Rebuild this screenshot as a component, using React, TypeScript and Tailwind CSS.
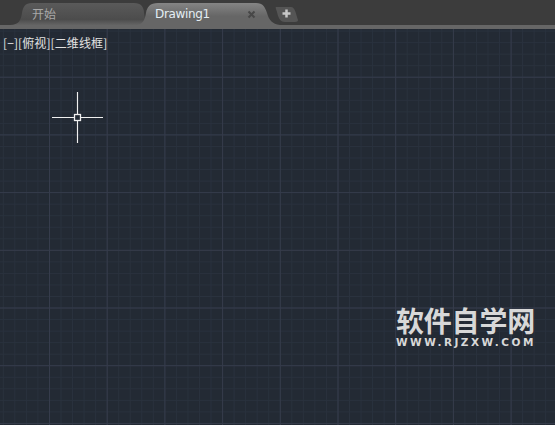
export default function App() {
  const vMajor = Array.from({ length: 9 }, (_, i) => 49.5 + 57.7 * i);
  const hMajor = Array.from({ length: 8 }, (_, i) => 19.5 + 57.7 * i);
  const vMinor = Array.from({ length: 50 }, (_, i) => 3.3 + 11.54 * i).filter((x) => x < 555);
  const hMinor = Array.from({ length: 40 }, (_, i) => 8 + 11.54 * i).filter((y) => y < 425);
  return (
    <div className="w-[555px] h-[425px] flex flex-col overflow-hidden bg-[#232a34] font-['DejaVu_Sans','Noto_Sans_CJK_SC',sans-serif]">
      <div className="h-[25px] shrink-0 flex pl-[10px] bg-[#3c3c3c]">
        <div className="relative w-[136px] h-[25px] flex">
          <svg className="absolute inset-0" width="136" height="25" viewBox="0 0 136 25">
            <defs>
              <linearGradient id="t1" x1="0" y1="0" x2="0" y2="1">
                <stop offset="0" stopColor="#5a5a5a" />
                <stop offset="0.75" stopColor="#4c4c4c" />
                <stop offset="1" stopColor="#646464" />
              </linearGradient>
              <linearGradient id="t2" x1="0" y1="0" x2="0" y2="1">
                <stop offset="0" stopColor="#858585" />
                <stop offset="0.6" stopColor="#666666" />
                <stop offset="1" stopColor="#666666" />
              </linearGradient>
            </defs>
            <path d="M0 25 C9 25 11 20 12 13 C13 7 15 3 22 3 L124 3 C131 3 134 7 134 13 L136 25 Z" fill="url(#t1)" />
          </svg>
          <span className="relative ml-[22px] mt-[6px] text-[12px] leading-[16px] text-[#a8a8a8] font-['Noto_Sans_CJK_SC',sans-serif]">开始</span>
        </div>
        <div className="relative w-[142px] h-[25px] -ml-[8px] flex">
          <svg className="absolute inset-0" width="142" height="25" viewBox="0 0 142 25">
            <path d="M0 25 C5 24 7 19 8 13 C9 7 12 3 20 3 L118 3 C125 3 127 7 129 13 C131 20 134 24 142 25 Z" fill="url(#t2)" />
          </svg>
          <span className="relative ml-[17px] mt-[6px] text-[12px] leading-[16px] tracking-[-0.35px] text-[#e4eef4]">Drawing1</span>
          <svg className="absolute left-[109px] top-[10px]" width="9" height="9" viewBox="0 0 9 9">
            <path d="M1.500 1.500 L7.500 7.500 M7.500 1.500 L1.500 7.500" stroke="#474747" strokeWidth="2" />
          </svg>
        </div>
        <div className="relative w-[24px] h-[25px] -ml-[5px]">
          <svg className="absolute inset-0" width="24" height="25" viewBox="0 0 24 25">
            <path d="M1 7 L16 7 C20 7 21 14 23 20 C23 21 22 22 20 22 L10 22 C5 22 3 17 2 12 C1.500 10 0 7 1 7 Z" fill="#555555" />
            <path d="M11.500 9.500 V17.500 M7.500 13.500 H15.500" stroke="#c8c8c8" strokeWidth="2.500" />
          </svg>
        </div>
      </div>
      <div className="h-[4px] shrink-0 bg-[#666666]" />
      <div className="relative flex-1">
        <svg className="absolute inset-0" width="555" height="396" viewBox="0 29 555 396">
          {vMinor.map((x) => (
            <line key={x} x1={x} y1="29" x2={x} y2="425" stroke="#2a323e" strokeWidth="1" />
          ))}
          {hMinor.map((y) => (
            <line key={y} x1="0" y1={y} x2="555" y2={y} stroke="#2a323e" strokeWidth="1" />
          ))}
          {vMajor.map((x) => (
            <line key={x} x1={x} y1="29" x2={x} y2="425" stroke="#363c4c" strokeWidth="1" />
          ))}
          {hMajor.map((y) => (
            <line key={y} x1="0" y1={y} x2="555" y2={y} stroke="#363c4c" strokeWidth="1" />
          ))}
          <path d="M77.500 92 V114 M77.500 121 V143 M52 117.500 H74 M81 117.500 H103" stroke="#f0f0f0" strokeWidth="1.150" fill="none" />
          <rect x="74.500" y="114.500" width="6" height="6" stroke="#f0f0f0" strokeWidth="1.300" fill="none" />
        </svg>
        <div className="relative ml-[3px] mt-[6px] text-[12px] leading-[16px] tracking-[0.1px] text-[#e2e2e2] font-['Noto_Sans_CJK_SC',sans-serif]">[−][俯视][二维线框]</div>
        <div className="absolute left-[396px] top-[275px] flex flex-col text-[#d8d8d8]">
          <div className="text-[28px] leading-[32px] font-bold tracking-[-0.2px] whitespace-nowrap font-['Noto_Sans_CJK_SC',sans-serif]">软件自学网</div>
          <div className="mt-[1px] text-[10.5px] leading-[11px] font-bold tracking-[2.5px] whitespace-nowrap font-['DejaVu_Sans',sans-serif]">WWW.RJZXW.COM</div>
        </div>
      </div>
    </div>
  );
}
